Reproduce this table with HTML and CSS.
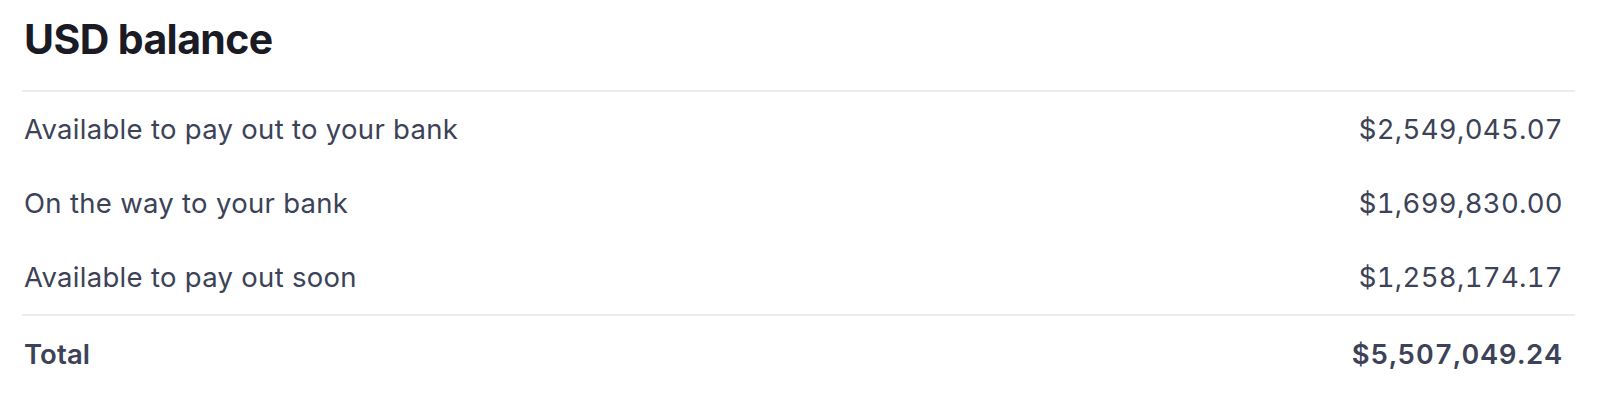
FILE: index.html
```html
<!DOCTYPE html>
<html lang="en">
<head>
<meta charset="utf-8">
<title>USD balance</title>
<link rel="stylesheet" href="styles.css">
</head>
<body>
<section class="balance">
  <h1 class="balance-title">USD balance</h1>
  <div class="balance-list">
    <div class="row"><span class="label">Available to pay out to your bank</span><span class="amount">$2,549,045.07</span></div>
    <div class="row"><span class="label">On the way to your bank</span><span class="amount">$1,699,830.00</span></div>
    <div class="row"><span class="label">Available to pay out soon</span><span class="amount">$1,258,174.17</span></div>
  </div>
  <div class="row total"><span class="label">Total</span><span class="amount">$5,507,049.24</span></div>
</section>
</body>
</html>
```

FILE: styles.css
```css
html, body {
  margin: 0;
  padding: 0;
  background: #ffffff;
}

body {
  font-family: Inter, "Noto Sans", sans-serif;
  color: #3c4257;
}

.balance {
  padding: 0 25px 0 22px;
}

.balance-title {
  margin: 0;
  padding: 14px 0 0 2px;
  height: 92px;
  box-sizing: border-box;
  font-size: 41px;
  font-weight: 700;
  line-height: 50px;
  color: #1a1b25;
  letter-spacing: -0.6px;
  border-bottom: 2px solid #ebeef1;
}

.balance-list {
  border-bottom: 2px solid #ebeef1;
}

.row {
  display: flex;
  justify-content: space-between;
  align-items: center;
  height: 74px;
  padding: 0 12px 0 2px;
  font-size: 27.5px;
  letter-spacing: 0.3px;
}

.amount {
  font-variant-numeric: tabular-nums;
}

.total {
  height: 76px;
  font-weight: 600;
  letter-spacing: 0.1px;
}

.total .amount {
  letter-spacing: 0.85px;
}
```
